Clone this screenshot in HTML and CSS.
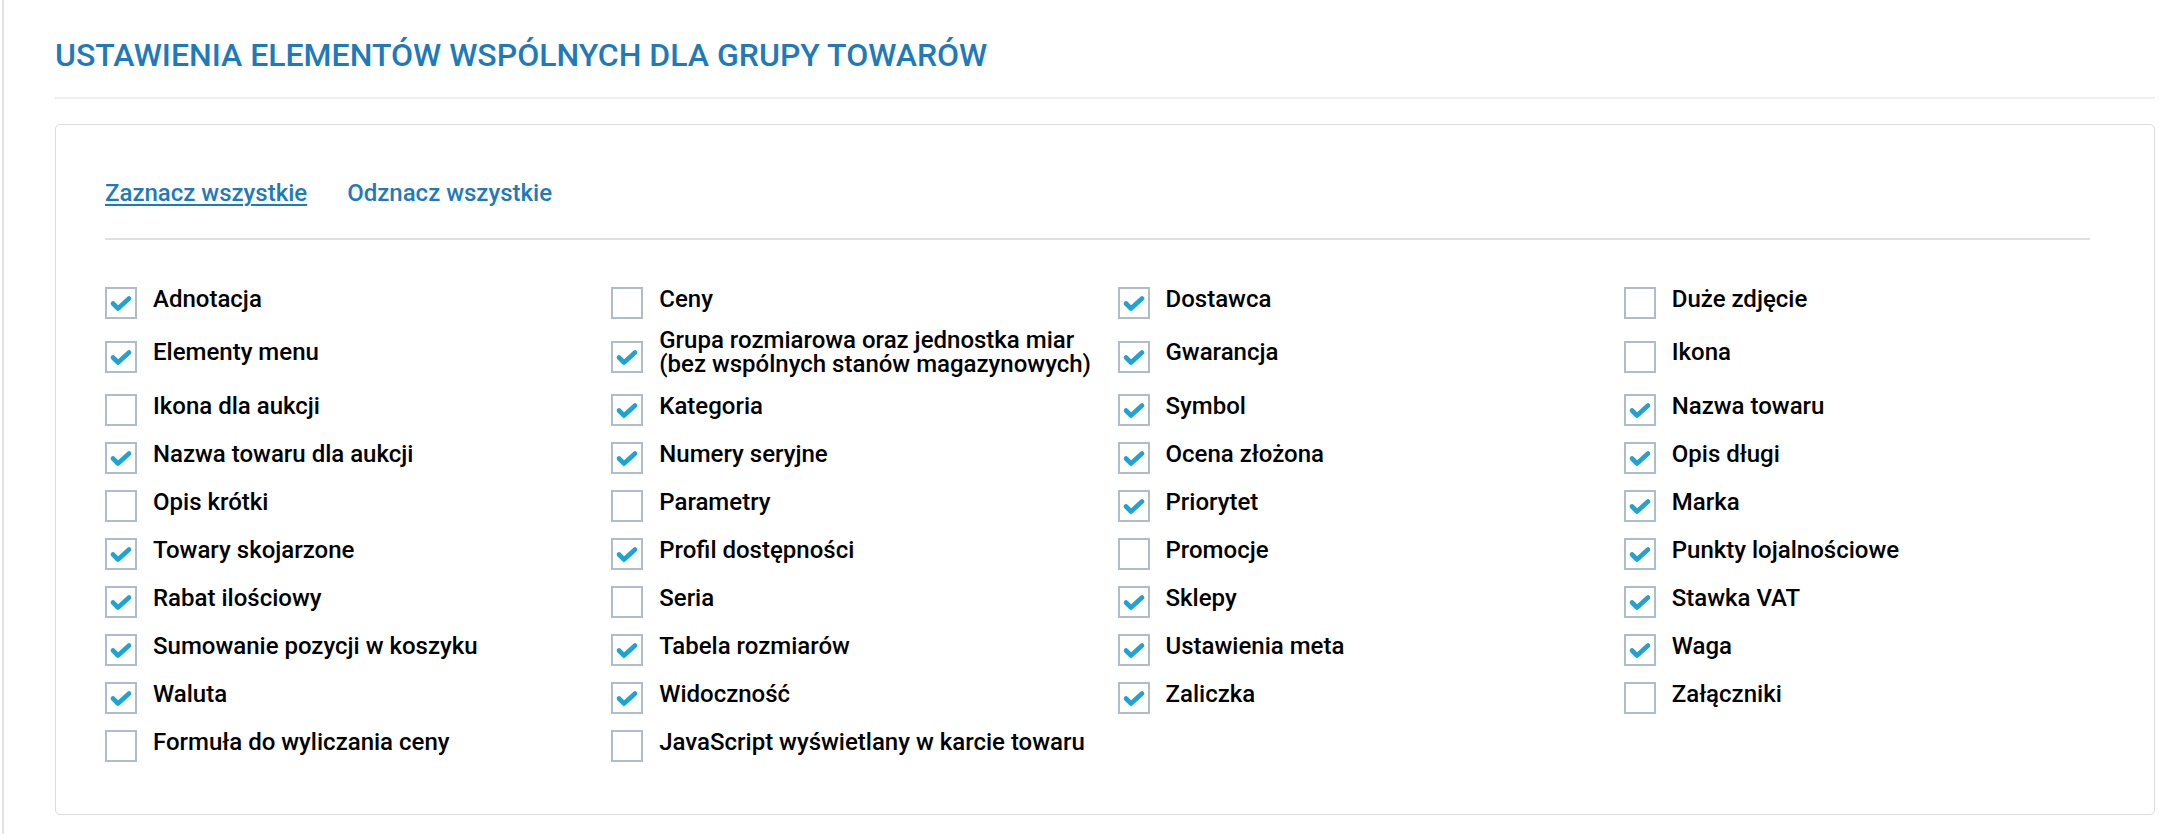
FILE: index.html
```html
<!DOCTYPE html>
<html lang="pl">
<head>
    <meta charset="UTF-8">
    <meta name="viewport" content="width=device-width, initial-scale=1.0">
    <title>Ustawienia elementów wspólnych</title>
    <link rel="stylesheet" href="styles.css">
</head>
<body>
    <div class="page">
        <div class="page-header">
            <h1>Ustawienia elementów wspólnych dla grupy towarów</h1>
        </div>

        <div class="panel">
            <div class="panel-actions">
                <a href="#" class="link active" id="selectAll">Zaznacz wszystkie</a>
                <a href="#" class="link" id="unselectAll">Odznacz wszystkie</a>
            </div>

            <div class="options">
                <label class="item"><input type="checkbox" checked><span class="box"></span><span class="text">Adnotacja</span></label>
                <label class="item"><input type="checkbox"><span class="box"></span><span class="text">Ceny</span></label>
                <label class="item"><input type="checkbox" checked><span class="box"></span><span class="text">Dostawca</span></label>
                <label class="item"><input type="checkbox"><span class="box"></span><span class="text">Duże zdjęcie</span></label>

                <label class="item"><input type="checkbox" checked><span class="box"></span><span class="text">Elementy menu</span></label>
                <label class="item"><input type="checkbox" checked><span class="box"></span><span class="text">Grupa rozmiarowa oraz jednostka miar<br>(bez wspólnych stanów magazynowych)</span></label>
                <label class="item"><input type="checkbox" checked><span class="box"></span><span class="text">Gwarancja</span></label>
                <label class="item"><input type="checkbox"><span class="box"></span><span class="text">Ikona</span></label>

                <label class="item"><input type="checkbox"><span class="box"></span><span class="text">Ikona dla aukcji</span></label>
                <label class="item"><input type="checkbox" checked><span class="box"></span><span class="text">Kategoria</span></label>
                <label class="item"><input type="checkbox" checked><span class="box"></span><span class="text">Symbol</span></label>
                <label class="item"><input type="checkbox" checked><span class="box"></span><span class="text">Nazwa towaru</span></label>

                <label class="item"><input type="checkbox" checked><span class="box"></span><span class="text">Nazwa towaru dla aukcji</span></label>
                <label class="item"><input type="checkbox" checked><span class="box"></span><span class="text">Numery seryjne</span></label>
                <label class="item"><input type="checkbox" checked><span class="box"></span><span class="text">Ocena złożona</span></label>
                <label class="item"><input type="checkbox" checked><span class="box"></span><span class="text">Opis długi</span></label>

                <label class="item"><input type="checkbox"><span class="box"></span><span class="text">Opis krótki</span></label>
                <label class="item"><input type="checkbox"><span class="box"></span><span class="text">Parametry</span></label>
                <label class="item"><input type="checkbox" checked><span class="box"></span><span class="text">Priorytet</span></label>
                <label class="item"><input type="checkbox" checked><span class="box"></span><span class="text">Marka</span></label>

                <label class="item"><input type="checkbox" checked><span class="box"></span><span class="text">Towary skojarzone</span></label>
                <label class="item"><input type="checkbox" checked><span class="box"></span><span class="text">Profil dostępności</span></label>
                <label class="item"><input type="checkbox"><span class="box"></span><span class="text">Promocje</span></label>
                <label class="item"><input type="checkbox" checked><span class="box"></span><span class="text">Punkty lojalnościowe</span></label>

                <label class="item"><input type="checkbox" checked><span class="box"></span><span class="text">Rabat ilościowy</span></label>
                <label class="item"><input type="checkbox"><span class="box"></span><span class="text">Seria</span></label>
                <label class="item"><input type="checkbox" checked><span class="box"></span><span class="text">Sklepy</span></label>
                <label class="item"><input type="checkbox" checked><span class="box"></span><span class="text">Stawka VAT</span></label>

                <label class="item"><input type="checkbox" checked><span class="box"></span><span class="text">Sumowanie pozycji w koszyku</span></label>
                <label class="item"><input type="checkbox" checked><span class="box"></span><span class="text">Tabela rozmiarów</span></label>
                <label class="item"><input type="checkbox" checked><span class="box"></span><span class="text">Ustawienia meta</span></label>
                <label class="item"><input type="checkbox" checked><span class="box"></span><span class="text">Waga</span></label>

                <label class="item"><input type="checkbox" checked><span class="box"></span><span class="text">Waluta</span></label>
                <label class="item"><input type="checkbox" checked><span class="box"></span><span class="text">Widoczność</span></label>
                <label class="item"><input type="checkbox" checked><span class="box"></span><span class="text">Zaliczka</span></label>
                <label class="item"><input type="checkbox"><span class="box"></span><span class="text">Załączniki</span></label>

                <label class="item"><input type="checkbox"><span class="box"></span><span class="text">Formuła do wyliczania ceny</span></label>
                <label class="item"><input type="checkbox"><span class="box"></span><span class="text">JavaScript wyświetlany w karcie towaru</span></label>
            </div>
        </div>
    </div>
</body>
</html>
```

FILE: styles.css
```css
body {
    margin: 0;
    font-family: 'Roboto', 'Liberation Sans', sans-serif;
    background: #fff;
    color: #000;
}

.page {
    margin-left: 2px;
    border-left: 2px solid #e4e4e4;
    padding: 37px 11px 0 51px;
    min-height: 797px;
}

.page-header {
    border-bottom: 2px solid #efefef;
    padding-bottom: 24px;
}

h1 {
    margin: 0;
    font-size: 32px;
    line-height: 36px;
    font-weight: 500;
    text-transform: uppercase;
    color: #1f7bb7;
}

.panel {
    margin-top: 25px;
    border: 1px solid #dcdcdc;
    border-radius: 5px;
    padding: 54px 64px 44px 49px;
}

.panel-actions {
    display: flex;
    gap: 40px;
    padding-bottom: 31px;
    border-bottom: 2px solid #e0e0e0;
}

.link {
    font-size: 24px;
    line-height: 28px;
    font-weight: 500;
    color: #1f7bb7;
    text-decoration: none;
}

.link.active {
    text-decoration: underline;
    text-decoration-thickness: 2px;
    text-underline-offset: 3px;
}

.options {
    display: grid;
    grid-template-columns: repeat(4, 1fr);
    width: calc(100% + 40px);
    padding-top: 39px;
}

.item {
    display: flex;
    align-items: center;
    gap: 16px;
    padding: 8px 0;
    cursor: pointer;
}

.item input {
    display: none;
}

.box {
    flex: none;
    width: 28px;
    height: 28px;
    border: 2px solid #b0bcc6;
    background: #fff;
}

.item input:checked + .box {
    background: url("data:image/svg+xml,%3Csvg xmlns='http://www.w3.org/2000/svg' viewBox='0 0 28 28'%3E%3Cpolyline points='6,14.5 11,19.5 22,9.5' fill='none' stroke='%231ea3d2' stroke-width='4.6' stroke-linecap='round' stroke-linejoin='round'/%3E%3C/svg%3E") no-repeat center / 28px 28px;
}

.text {
    margin: -3px 0 -2px;
    font-size: 24px;
    line-height: 24px;
    font-weight: 500;
    color: #000;
    transform: translateY(-4px);
}
```
